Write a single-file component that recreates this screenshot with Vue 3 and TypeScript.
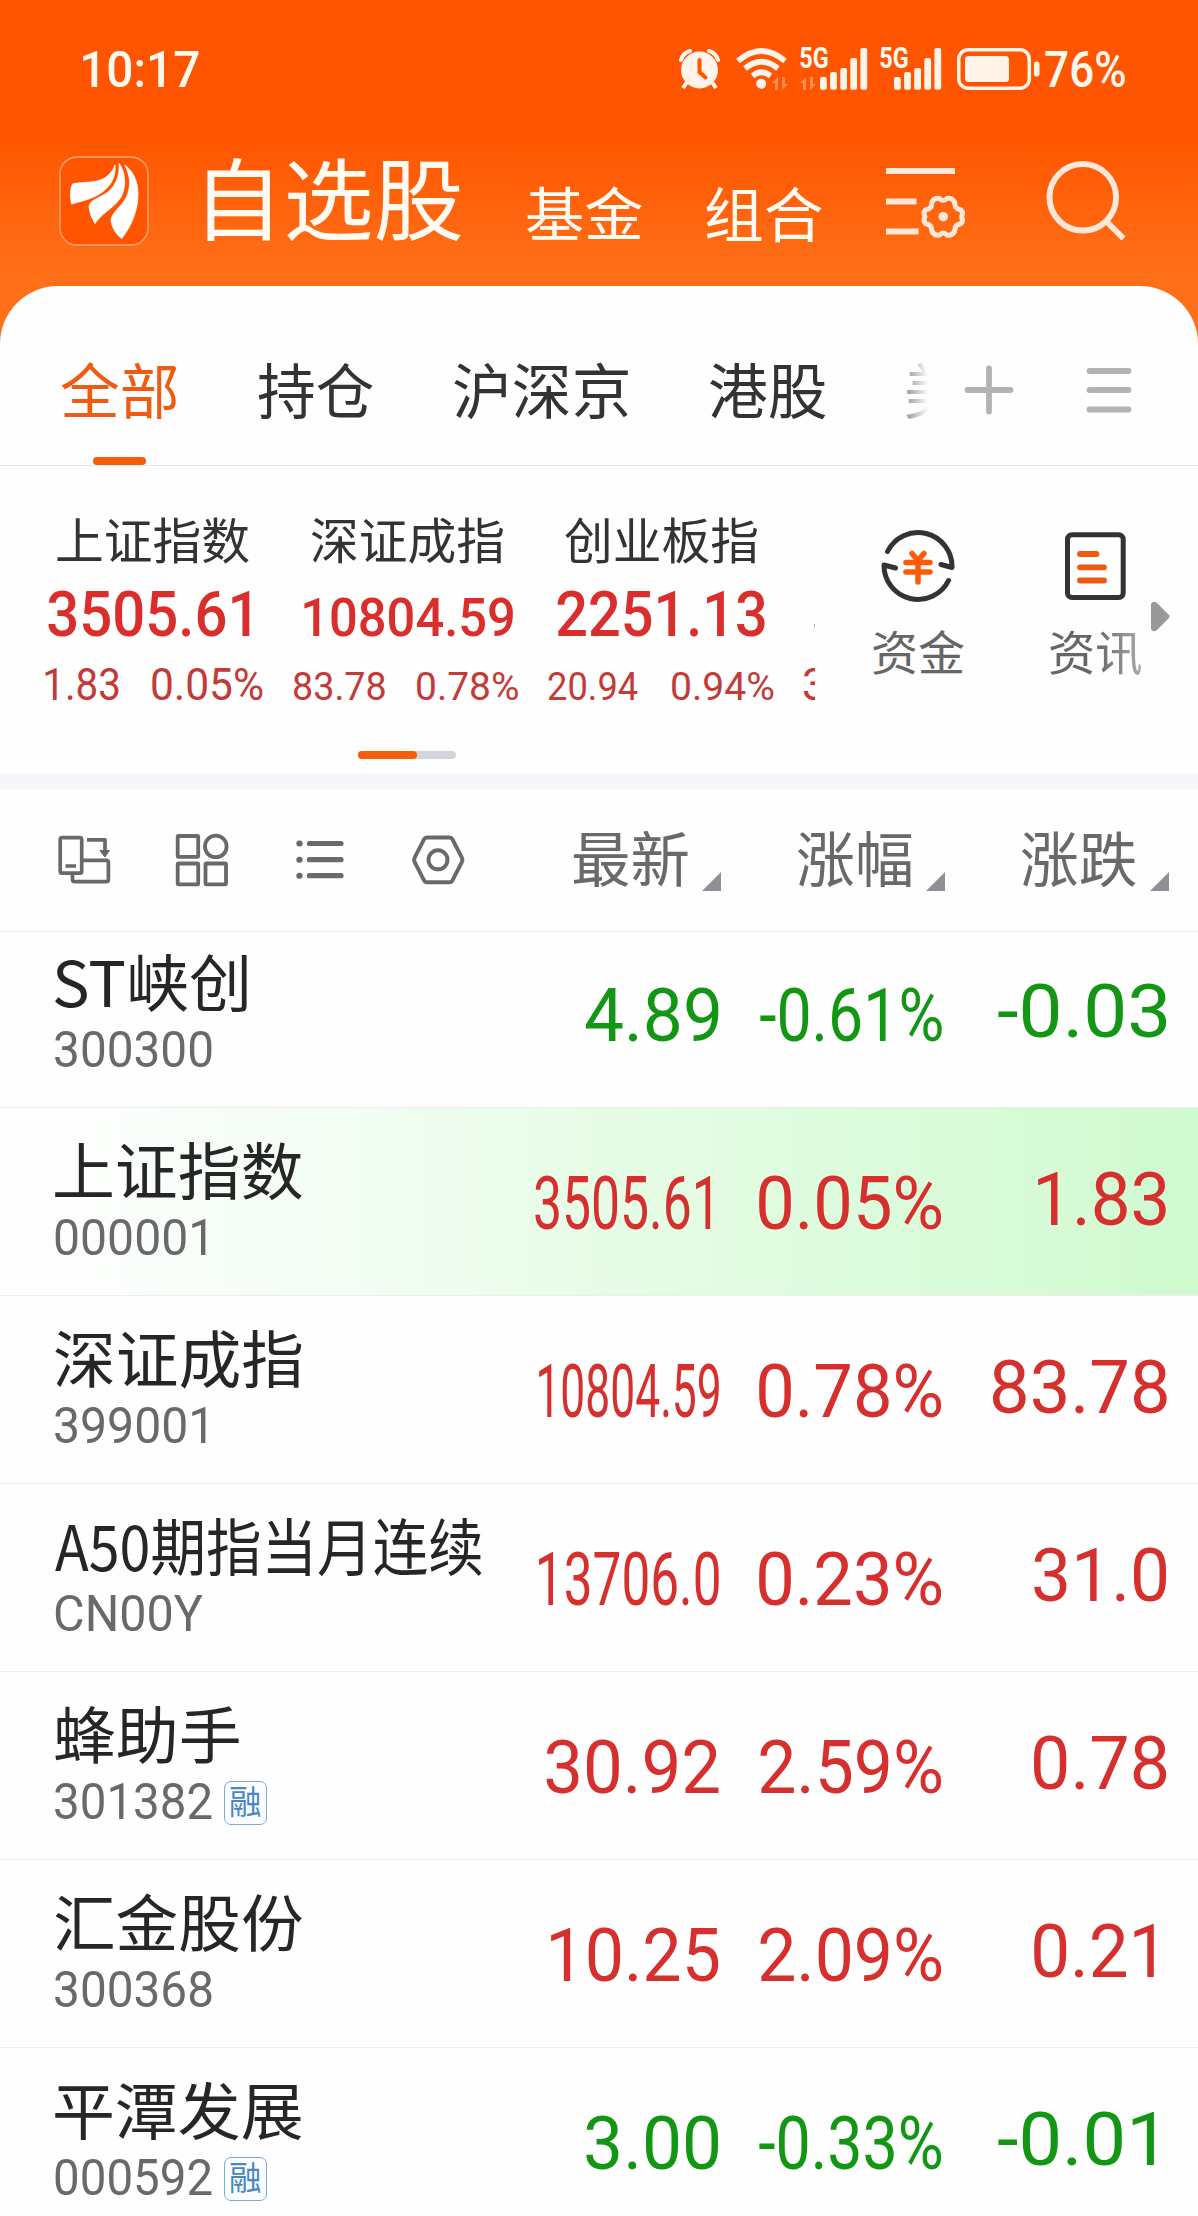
<script setup lang="ts">
import { defineComponent, h } from 'vue'

const NUM = 'Roboto, "Liberation Sans", sans-serif'
const CJK = '"Noto Sans CJK SC", "Noto Sans", sans-serif'
const ctx = document.createElement('canvas').getContext('2d')!

// Text squeezed or widened to an exact visible width.
// Latin boxes are one cap height tall, Chinese boxes one em tall.
const Fit = defineComponent({
  props: {
    t: { type: String, required: true },
    w: { type: Number, required: true },
    size: { type: Number, required: true },
    weight: { type: Number, default: 400 },
    cjk: { type: Boolean, default: false },
  },
  setup(p) {
    return () => {
      const family = p.cjk ? CJK : NUM
      ctx.font = `${p.weight} ${p.size}px ${family}`
      const m = ctx.measureText(p.t)
      const left = -m.actualBoundingBoxLeft
      const sx = p.w / (m.actualBoundingBoxRight - left)
      const height = p.cjk ? p.size : p.size * 0.711
      const base = p.cjk ? p.size * 0.88 : height
      const natural = p.size / 2 + (m.fontBoundingBoxAscent - m.fontBoundingBoxDescent) / 2
      return h('span', { class: 'fit', style: { width: p.w + 'px', height: height + 'px' } }, [
        h('span', {
          class: 'fit-text',
          style: {
            fontFamily: family,
            fontSize: p.size + 'px',
            lineHeight: p.size + 'px',
            fontWeight: p.weight,
            transform: `translate(${-left * sx}px, ${base - natural}px) scaleX(${sx})`,
          },
        }, p.t),
      ])
    }
  },
})

interface Cell { t: string; w: number; tail: number }
interface Row { name: string; nw: number; code: string; cw: number; down?: boolean; hot?: boolean; margin?: boolean; cells: Cell[] }
const c = (t: string, w: number, tail: number): Cell => ({ t, w, tail })

const rows: Row[] = [
  { name: 'ST峡创', nw: 192.5, code: '300300', cw: 157, down: true, cells: [c('4.89', 133.5, 1), c('-0.61%', 181.5, 0.5), c('-0.03', 168.5, 1.5)] },
  { name: '上证指数', nw: 247, code: '000001', cw: 150.5, hot: true, cells: [c('3505.61', 175.5, 9), c('0.05%', 182, 1), c('1.83', 128, 1.5)] },
  { name: '深证成指', nw: 246.5, code: '399001', cw: 150.5, cells: [c('10804.59', 180, 0.5), c('0.78%', 182, 1), c('83.78', 174, 1)] },
  { name: 'A50期指当月连续', nw: 426.5, code: 'CN00Y', cw: 148, cells: [c('13706.0', 180, 0.5), c('0.23%', 182, 1), c('31.0', 132.5, 1.5)] },
  { name: '蜂助手', nw: 184, code: '301382', cw: 157, margin: true, cells: [c('30.92', 172.5, 1.5), c('2.59%', 181, 1), c('0.78', 132.5, 1)] },
  { name: '汇金股份', nw: 247, code: '300368', cw: 157, cells: [c('10.25', 167.5, 1.5), c('2.09%', 181, 1), c('0.21', 120.5, 13.5)] },
  { name: '平潭发展', nw: 247, code: '000592', cw: 157, down: true, margin: true, cells: [c('3.00', 132.5, 1.5), c('-0.33%', 182, 0.5), c('-0.01', 156.5, 13.5)] },
]

const indexes = [
  { name: '上证指数', value: '3505.61', vw: 201.5, vs: 63.5, vx: 3, diff: '1.83', dw: 73.5, pct: '0.05%', pw: 111, gap: 33.5, s: 44, dx: 0 },
  { name: '深证成指', value: '10804.59', vw: 209, vs: 54.5, vx: 5, diff: '83.78', dw: 91.5, pct: '0.78%', pw: 101.5, gap: 32, s: 39.5, dx: -5.5 },
  { name: '创业板指', value: '2251.13', vw: 208, vs: 63.5, vx: 4, diff: '20.94', dw: 90, pct: '0.94%', pw: 102, gap: 33.5, s: 39.5, dx: -5 },
]

const tabs = [
  { t: '全部', w: 115.5 }, { t: '持仓', w: 115.5 }, { t: '沪深京', w: 174.5 }, { t: '港股', w: 115.5 },
]
const columns = [{ t: '最新', w: 115 }, { t: '涨幅', w: 115 }, { t: '涨跌', w: 115.5 }]
const barTops = [77, 72, 68, 58, 48]
</script>

<template>
  <div class="page">
    <header class="top">
      <div class="status">
        <Fit class="time" t="10:17" :w="116" :size="50" :weight="500" />
        <svg class="alarm" width="41" height="40" viewBox="679 50 41 40">
          <circle cx="699.5" cy="71" r="18.5" fill="#fff3ea" />
          <path d="M681 61q2-7 9-9M718 61q-2-7-9-9" fill="none" stroke="#fff3ea" stroke-width="4" stroke-linecap="round" />
          <path d="M687 83l-4 6M712 83l4 6" stroke="#fff3ea" stroke-width="4" />
          <path d="M699.5 61v12l6 5.500" fill="none" stroke="#ff5500" stroke-width="4" stroke-linecap="round" />
        </svg>
        <svg class="wifi" width="52" height="42" viewBox="736 48 52 42">
          <g fill="none" stroke="#fff3ea" stroke-width="5.600">
            <path d="M738 61q23.500-20 47 0" />
            <path d="M745 68.500q16.500-13.500 33 0" />
            <path d="M752.500 76q9-7.500 18 0" />
          </g>
          <circle cx="761.200" cy="83.800" r="5" fill="#fff3ea" />
          <path d="M772 83l6-6v13h-3v-7zM788 84l-6 6V77h3v7z" fill="#ff8d55" />
        </svg>
        <div class="signal first">
          <Fit t="5G" :w="28" :size="29" :weight="700" />
          <svg width="68" height="42" viewBox="800 48 68 42">
            <path d="M800 83l6-6v13h-3v-7zM816 84l-6 6V77h3v7z" fill="#ff8d55" />
            <rect v-for="(y, i) in barTops" :key="i" :x="820 + i * 10.1" :y="y" width="6.8" :height="89.700 - y" rx="2" fill="#fff3ea" />
          </svg>
        </div>
        <div class="signal second">
          <Fit t="5G" :w="28" :size="29" :weight="700" />
          <svg width="62" height="42" viewBox="880 48 62 42">
            <rect v-for="(y, i) in barTops" :key="i" :x="894 + i * 10.1" :y="y" width="6.800" :height="89.700 - y" rx="2" fill="#fff3ea" />
          </svg>
        </div>
        <svg class="battery" width="84" height="42" viewBox="957 48 84 42">
          <rect x="958.800" y="49.800" width="70.500" height="38.500" rx="9.500" fill="none" stroke="#fff3ea" stroke-width="3.500" />
          <rect x="965" y="56" width="44" height="26" rx="3.500" fill="#fff3ea" />
          <rect x="1034" y="61.500" width="5.500" height="15" rx="2.700" fill="#fff3ea" />
        </svg>
        <Fit class="pct" t="76%" :w="80" :size="50" :weight="500" />
      </div>

      <nav class="nav">
        <svg class="logo" width="90" height="90" viewBox="59 156 90 90">
          <rect x="60" y="157" width="88" height="88" rx="17" fill="#ff5500" stroke="#ff9560" stroke-width="1.800" />
          <g fill="#fff" stroke="#fff" stroke-width=".8" stroke-linejoin="round">
            <path d="M115 165C112 173 106 179 97 181C89 183 79 182 72.500 184Q69 191 71.500 204C82 201 92 199 101 193C111 186 116 177 115 165z" />
            <path d="M119 163.500C120 174 117 184 108 192C100 198 89 200 89 207Q90 216 95 223.500C102 213 112 209 119 200C127 190 126 172 119 163.500z" />
            <path d="M124.700 165C131 176 131 188 126 198C121 207 111 213 111 221Q113 232 121.700 238.700C132 225 138 210 138 194C138 180 132 170 124.700 165z" />
          </g>
        </svg>
        <Fit class="title" t="自选股" :w="254" :size="89" cjk />
        <Fit class="sub a" t="基金" :w="115" :size="58.5" cjk />
        <Fit class="sub b" t="组合" :w="116" :size="59.5" cjk />
        <svg class="filter" width="82" height="76" viewBox="885 165 82 76">
          <g fill="none" stroke="#ffe8d8" stroke-width="6">
            <path d="M886 171h69M886 201.500h30.500M886 231.500h32.500" />
            <path stroke-width="5" stroke-linejoin="round" d="M939.500 198.500Q943.300 202.500 947 198.500Q952 197.500 954.500 202L955.500 207Q957 209 961 210Q963.800 213 961.500 216.700Q963.800 220.500 961 223.500Q957 224.500 955.500 226.500L954.500 231.500Q952 236 947 235Q943.300 231 939.500 235Q934.500 236 932 231.500L931 226.500Q929.500 224.500 925.500 223.500Q922.700 220.500 925 216.700Q922.700 213 925.500 210Q929.500 209 931 207L932 202Q934.500 197.500 939.500 198.500z" />
          </g>
          <circle cx="943.300" cy="216.700" r="4.800" fill="#ffe8d8" />
        </svg>
        <svg class="search" width="82" height="82" viewBox="1045 160 82 82">
          <circle cx="1082.800" cy="197.300" r="33.300" fill="none" stroke="#ffe8d8" stroke-width="6" />
          <path d="M1106.500 221.500L1123.500 238.500" stroke="#ffe8d8" stroke-width="6" />
        </svg>
      </nav>
    </header>

    <section class="card">
      <div class="tabs">
        <div v-for="(tab, i) in tabs" :key="tab.t" class="tab" :class="{ active: i === 0 }">
          <Fit :t="tab.t" :w="tab.w" :size="60" cjk />
        </div>
        <div class="tab-cut"><Fit t="美" :w="55" :size="60" cjk /></div>
        <svg class="plus" width="50" height="50" viewBox="0 0 50 50">
          <path d="M25 3.500v43M3.500 25h43" stroke="#b3b3b3" stroke-width="5.800" stroke-linecap="round" />
        </svg>
        <svg class="burger" width="46" height="50" viewBox="0 0 46 50">
          <path d="M3.500 6h39M3.500 25h39M3.500 44.500h39" stroke="#b3b3b3" stroke-width="5.800" stroke-linecap="round" />
        </svg>
      </div>

      <div class="market">
        <div class="indexes">
          <div v-for="ix in indexes" :key="ix.name" class="index">
            <Fit class="ix-name" :t="ix.name" :w="192" :size="49" cjk />
            <div class="ix-value" :style="{ marginLeft: ix.vx + 'px' }"><Fit :t="ix.value" :w="ix.vw" :size="ix.vs" :weight="500" /></div>
            <div class="ix-diff" :style="{ marginLeft: ix.dx + 'px', columnGap: ix.gap + 'px' }">
              <Fit :t="ix.diff" :w="ix.dw" :size="ix.s" />
              <Fit :t="ix.pct" :w="ix.pw" :size="ix.s" />
            </div>
          </div>
          <div class="index">
            <div class="ix-name blank"></div>
            <div class="ix-value peek"><Fit t="3" :w="27" :size="63.500" :weight="500" /></div>
            <div class="ix-diff cut"><Fit t="3" :w="20" :size="44" /></div>
          </div>
        </div>
        <div class="shortcut fund">
          <svg width="76" height="76" viewBox="880.500 528 76 76" fill="none" stroke-linecap="round" stroke-linejoin="round">
            <path d="M888 551.500A34 34 0 0 1 952.500 567.500L941.500 564.500M949 580.500A34 34 0 0 1 884.500 565L896 568" stroke="#333" stroke-width="5" />
            <path d="M912.500 553.500l6 7 6-7M906.500 562.500h24M906.500 572h24M918.500 560v22" stroke="#ff5a0a" stroke-width="5.500" />
          </svg>
          <Fit t="资金" :w="91" :size="47" cjk />
        </div>
        <div class="shortcut news">
          <svg width="76" height="76" viewBox="1058 528 76 76" fill="none" stroke-linecap="round">
            <rect x="1067.500" y="534.800" width="55.700" height="62.800" rx="4.500" stroke="#333" stroke-width="5" />
            <path d="M1080 554h16.500M1080 567.300h24M1080 580.500h24" stroke="#ee5a12" stroke-width="5.800" />
          </svg>
          <Fit class="fade" t="资讯" :w="91.5" :size="47" cjk />
        </div>
        <svg class="more" width="19" height="31" viewBox="0 0 19 31"><path d="M0 3Q2-1 6 2L17.500 13.500Q19.500 15.500 17.500 17.500L6 29Q2 32 0 28z" fill="#999" /></svg>
      </div>
      <div class="pager"><i></i></div>
    </section>

    <section class="tools">
      <svg class="tool" width="54" height="54" viewBox="57 833 54 54" fill="none" stroke="#696969" stroke-width="3.700" stroke-linejoin="round">
        <rect x="60.200" y="837.700" width="21.500" height="35.500" rx="2" />
        <path d="M65.500 866h10.500M87 839.800h18v12M72.500 874v5.500q0 2.200 2.200 2.200h31.500q2.200 0 2.200-2.200V862.500q0-2.200-2.200-2.200H83" />
        <path d="M100 850.500h9.500l-4.700 6.500z" fill="#696969" stroke-width="1" />
      </svg>
      <svg class="tool" width="54" height="54" viewBox="175 833 54 54" fill="none" stroke="#696969" stroke-width="3.800">
        <rect x="177.700" y="836" width="20.500" height="20.800" rx="1" />
        <circle cx="215.800" cy="846.400" r="10.800" />
        <rect x="177.700" y="863.500" width="20.500" height="20.800" rx="1" />
        <rect x="205.500" y="863.500" width="20.500" height="20.800" rx="1" />
      </svg>
      <svg class="tool" width="54" height="54" viewBox="293 833 54 54" stroke="#696969" stroke-width="5.200" stroke-linecap="round">
        <path d="M309.500 843.500h31.500M309.500 859.700h31.500M309.500 875.700h31.500" />
        <path d="M299.300 843.500h.4M299.300 859.700h.4M299.300 875.700h.4" stroke-width="6" />
      </svg>
      <svg class="tool" width="54" height="54" viewBox="411 833 54 54" fill="none" stroke="#696969" stroke-width="3.900" stroke-linejoin="round">
        <path d="M427 837.500h22.500q2 0 3 1.800l9.200 18q1.300 2.500 0 5l-9.200 18q-1 1.900-3 1.900H427q-2 0-3-1.900l-9.200-18q-1.300-2.500 0-5l9.200-18q1-1.800 3-1.800z" />
        <circle cx="438" cy="859.800" r="9.500" />
      </svg>
      <div v-for="col in columns" :key="col.t" class="col">
        <Fit :t="col.t" :w="col.w" :size="60" cjk /><i></i>
      </div>
    </section>

    <section class="list">
      <div v-for="r in rows" :key="r.code" class="row" :class="{ hot: r.hot, down: r.down }">
        <div class="who">
          <Fit class="name" :t="r.name" :w="r.nw" :size="62.5" cjk />
          <div class="code">
            <Fit :t="r.code" :w="r.cw" :size="50" />
            <span v-if="r.margin" class="badge"><Fit t="融" :w="30.5" :size="33" cjk /></span>
          </div>
        </div>
        <div v-for="(x, i) in r.cells" :key="i" class="cell" :style="{ paddingRight: x.tail + 'px' }">
          <Fit :t="x.t" :w="x.w" :size="74" />
        </div>
      </div>
    </section>
  </div>
</template>

<style>
body { margin: 0; background: #fff; }
.fit { display: block; flex: none; white-space: nowrap; }
.fit-text { display: block; width: max-content; transform-origin: 0 0; }
</style>

<style scoped>
.page { width: 1198px; height: 2216px; overflow: hidden; background: #fefefe; font-family: "Noto Sans CJK SC", sans-serif; }
svg { display: block; flex: none; }

.top { height: 346px; background: linear-gradient(#ff5500 0 135px, #ff6f18 270px, #ff6f18); color: #fff8ef; }
.status { display: flex; align-items: center; height: 42px; padding-top: 48px; }
.time { margin-left: 83px; }
.alarm { margin-left: 480px; }
.wifi { margin-left: 16px; }
.signal { display: flex; align-items: flex-start; height: 42px; }
.signal.first { margin-left: 12px; }
.signal.first svg { margin-left: -28px; }
.signal.second { margin-left: 12px; }
.signal.second svg { margin-left: -28px; }
.battery { margin-left: 15px; }
.pct { margin-left: 4px; }

.nav { display: flex; align-items: flex-start; padding-top: 66px; color: #fffaf2; }
.logo { margin-left: 59px; }
.title { margin: -1px 0 0 58px; }
.sub { margin-top: 29px; }
.sub.a { margin-left: 66px; }
.sub.b { margin-left: 64px; }
.filter { margin: 9px 0 0 62.500px; }
.search { margin: 4px 0 0 78px; }

.card { margin-top: -60px; height: 488px; border-radius: 58px 58px 0 0; background: #fefefe; }
.tabs { display: flex; align-items: flex-start; box-sizing: border-box; height: 180px; padding: 76px 0 0 61px; border-bottom: 1px solid #e6e6e6; color: #333; }
.tab { margin-right: 81px; }
.tab.active { color: #ee5c14; }
.tab.active::after { content: ""; display: block; width: 53px; height: 8px; margin: 35px 0 0 32px; border-radius: 4px; background: #f75c0b; }
.tab-cut { width: 22px; overflow: hidden; opacity: .5; -webkit-mask-image: linear-gradient(90deg, #000, transparent); mask-image: linear-gradient(90deg, #000, transparent); }
.plus { margin: 3px 0 0 35.500px; }
.burger { margin: 3px 0 0 72px; }

.market { display: flex; align-items: flex-start; height: 284px; }
.indexes { display: flex; box-sizing: border-box; width: 815px; height: 250px; padding: 50px 0 0 45px; overflow: hidden; }
.index { flex: none; width: 254px; }
.ix-name { margin-left: 11.500px; color: #333; }
.ix-name.blank { height: 49px; }
.ix-value { display: flex; align-items: flex-end; height: 48px; margin-top: 23.500px; color: #da2e2d; }
.ix-value.peek { margin-left: 6.500px; }
.ix-diff { display: flex; align-items: flex-end; height: 32px; margin-top: 31.500px; color: #c33b38; }
.ix-diff.cut { margin-left: -3px; }
.shortcut { display: flex; flex-direction: column; align-items: center; width: 92px; padding-top: 62px; color: #666; }
.shortcut svg { margin-bottom: 25px; }
.fund { margin-left: 57px; }
.news { margin-left: 86px; }
.fade { -webkit-mask-image: linear-gradient(90deg, #000 50%, rgba(0, 0, 0, .55)); mask-image: linear-gradient(90deg, #000 50%, rgba(0, 0, 0, .55)); }
.more { margin: 134.500px 0 0 9px; }
.pager { width: 98px; height: 8px; margin: 0.500px 0 0 358px; border-radius: 4px; background: #d3d5da; }
.pager i { display: block; width: 59px; height: 8px; border-radius: 4px; background: #f75c0b; }

.tools { display: flex; align-items: flex-start; box-sizing: border-box; height: 158px; padding-left: 57px; border-top: 15px solid #f5f7fa; border-bottom: 1px solid #eee; color: #696969; }
.tool { margin: 44px 64px 0 0; }
.tool:nth-of-type(4) { margin-right: 0; }
.col { display: flex; align-items: flex-end; box-sizing: border-box; flex: none; width: 224px; padding-left: 107.500px; margin-top: 40.500px; }
.col i { width: 0; height: 0; margin: 0 0 -1px 14px; border-left: 19px solid transparent; border-bottom: 19px solid #8f8f96; }

.list { height: 1284px; overflow: hidden; }
.row { display: grid; grid-template-columns: 500px 219.500px 222px 226px; box-sizing: border-box; height: 188px; border-top: 1px solid #eee; color: #d6302e; }
.row:first-child { margin-top: -13px; }
.row.down { color: #129614; }
.row.hot { background: linear-gradient(90deg, #fefefe 3%, #f1fdf2 32%, #e6fce6 52%, #d0fad0); }
.who { padding-left: 54.500px; }
.name { color: #262626; margin-top: 33px; }
.code { display: flex; height: 36px; margin-top: 15.500px; color: #696969; }
.badge { box-sizing: border-box; display: flex; justify-content: center; width: 43px; height: 44px; margin: -2px 0 0 12.500px; padding-top: 3px; border: 1.500px solid #7fa9d2; border-radius: 7px; background: #fafdff; color: #4a86c2; }
.cell { display: flex; justify-content: flex-end; padding-top: 69px; }
.cell:last-child { padding-top: 65px; }
</style>
